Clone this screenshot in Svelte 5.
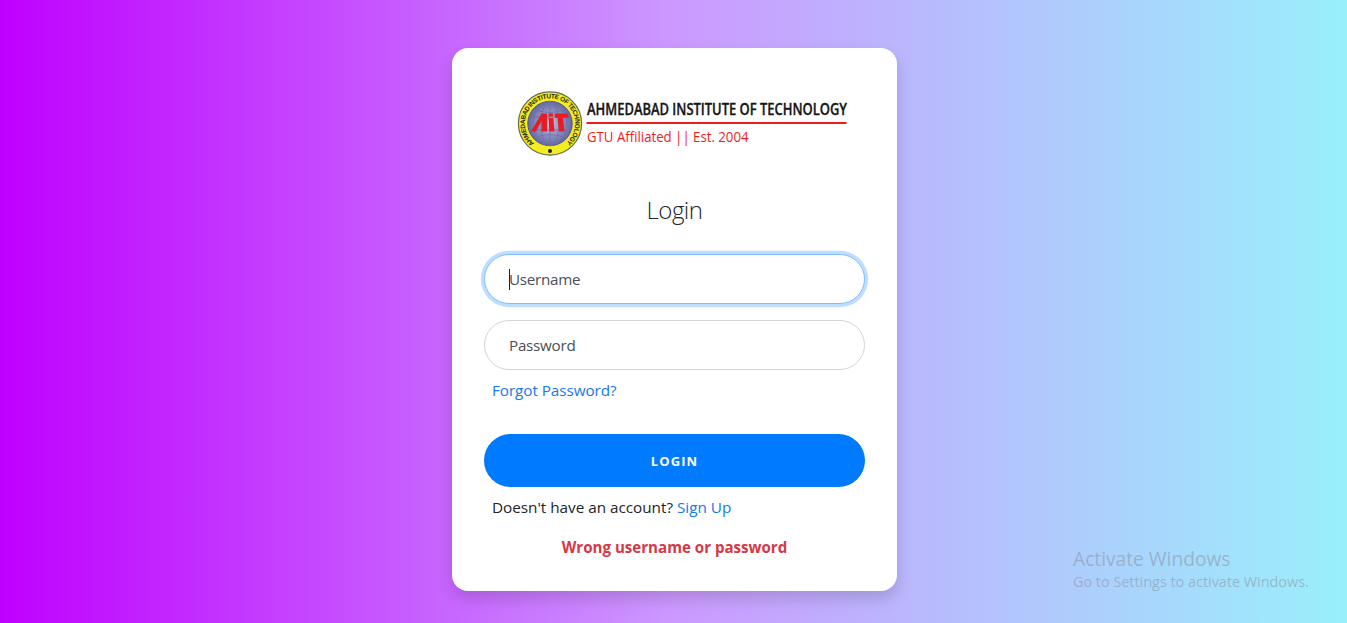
<script>
  let username = $state('');
  let password = $state('');
</script>

<main>
  <section class="card">
    <svg class="brand" width="340" height="68" viewBox="0 0 340 68" role="img" aria-label="Ahmedabad Institute of Technology">
      <defs>
        <radialGradient id="globe"><stop offset="0" stop-color="#c3c3e0" /><stop offset="1" stop-color="#6468a4" /></radialGradient>
        <path id="ring" d="M17.200 55.200 A25.200 25.200 0 1 1 48.800 55.200" />
      </defs>
      <circle cx="33" cy="35.500" r="31.600" fill="#f2ec22" stroke="#666b50" stroke-width="1.200" />
      <circle cx="33" cy="35.500" r="22.200" fill="url(#globe)" stroke="#50538a" stroke-width="1" />
      <g transform="translate(0 1)" fill="none" stroke="#6d70a8" stroke-width=".8">
        <ellipse cx="33" cy="34.500" rx="9" ry="22" />
        <ellipse cx="33" cy="34.500" rx="17" ry="22" />
        <path d="M33 13v43M12 28h42M12 41h42M17 20q16 7 32 0M17 49q16-7 32 0" />
      </g>
      <text class="seal"><textPath href="#ring" textLength="123" lengthAdjust="spacing">AHMEDABAD INSTITUTE OF TECHNOLOGY</textPath></text>
      <circle cx="33" cy="63" r="2" fill="#222" />
      <g fill="#e71c25">
        <path d="M14 43.500 24.500 25.500H30V43.500H24.500V33L18.800 43.500z" />
        <path d="M31.500 30H36.300L37.500 43.500H32.500z" />
        <path d="M31.500 25.500H36L36.200 28.500H31.500z" />
        <path d="M37.500 25.500H50.500L52 29.800H46L47.500 43.500H42L40.500 29.800H38z" />
      </g>
      <text class="name" x="70" y="26.500" textLength="260" lengthAdjust="spacingAndGlyphs">AHMEDABAD INSTITUTE OF TECHNOLOGY</text>
      <path d="M69.500 35h260" stroke="#ed1c24" stroke-width="2.200" />
      <text class="since" x="70" y="53.500" textLength="161.500" lengthAdjust="spacingAndGlyphs">GTU Affiliated || Est. 2004</text>
    </svg>

    <h1>Login</h1>
    <form onsubmit={(e) => e.preventDefault()}>
      <div class="field active">
        <span class="caret"></span>
        <input aria-label="Username" placeholder="Username" bind:value={username} />
      </div>
      <div class="field">
        <input type="password" aria-label="Password" placeholder="Password" bind:value={password} />
      </div>
      <a class="forgot" href="#forgot">Forgot Password?</a>
      <button type="submit">LOGIN</button>
      <p class="signup">Doesn't have an account? <a href="#signup">Sign Up</a></p>
      <p class="error">Wrong username or password</p>
    </form>
  </section>
  <aside>
    <div class="activate">Activate Windows</div>
    <div class="settings">Go to Settings to activate Windows.</div>
  </aside>
</main>

<style>
  :global(body) { margin: 0; }
  * { box-sizing: border-box; }
  main {
    height: 623px;
    padding-top: 48px;
    overflow: hidden;
    font: 400 15.300px/24px "Open Sans", "Noto Sans", sans-serif;
    color: #212529;
    background: linear-gradient(to right, #bf00ff, #cc99ff 50%, #99f0fb);
  }
  .card {
    width: 445px;
    height: 543px;
    margin-left: 452px;
    padding: 40px 32px 0;
    border-radius: 16px;
    background: #fff;
    box-shadow: 0 8px 16px rgba(0, 0, 0, .15);
  }
  .brand { display: block; margin-left: 33px; overflow: visible; }
  .seal { font: 700 6.500px "Liberation Sans", sans-serif; fill: #24240f; }
  .name { font: 600 16.500px "Open Sans", sans-serif; fill: #161616; stroke: #161616; stroke-width: .35px; }
  .since { font: 400 13.800px "Open Sans", sans-serif; fill: #ed1c24; }
  h1 {
    height: 30px;
    margin: 39px 0 29px;
    text-align: center;
    font-size: 24px;
    line-height: 29px;
    font-weight: 300;
    letter-spacing: -.5px;
  }
  form { display: flex; flex-direction: column; }
  .field {
    display: flex;
    align-items: center;
    height: 50px;
    margin-bottom: 16px;
    padding: 0 24px;
    border: 1px solid #d2d4d8;
    border-radius: 25px;
    background: #fff;
  }
  .field.active { border-color: #80bdff; box-shadow: 0 0 0 3.200px rgba(0, 123, 255, .25); }
  .caret { width: 1px; height: 21px; margin-right: -1px; background: #222; z-index: 1; }
  input {
    width: 100%;
    padding: 0;
    border: 0;
    outline: 0;
    background: transparent;
    font: inherit;
    font-size: 15.200px;
    letter-spacing: -.25px;
    color: #495057;
  }
  input::placeholder { color: #495057; opacity: 1; }
  a { color: #1878e8; text-decoration: none; }
  .forgot { height: 24px; margin: -8px 0 0 8px; letter-spacing: -.08px; }
  button {
    height: 53px;
    margin-top: 32px;
    border: 0;
    border-radius: 27px;
    background: #007bff;
    color: #fff;
    font: 700 13px "Open Sans", sans-serif;
    letter-spacing: 1.100px;
  }
  p { margin: 0; }
  .signup { margin: 8px 0 0 8px; letter-spacing: -.02px; }
  .error { margin-top: 16px; text-align: center; color: #d63848; font-size: 15.100px; font-weight: 700; }
  aside { position: absolute; left: 1073px; top: 546px; color: rgba(140, 150, 165, .58); white-space: nowrap; }
  .activate { font-size: 19.200px; line-height: 26px; }
  .settings { font-size: 14.400px; line-height: 20px; }
</style>
